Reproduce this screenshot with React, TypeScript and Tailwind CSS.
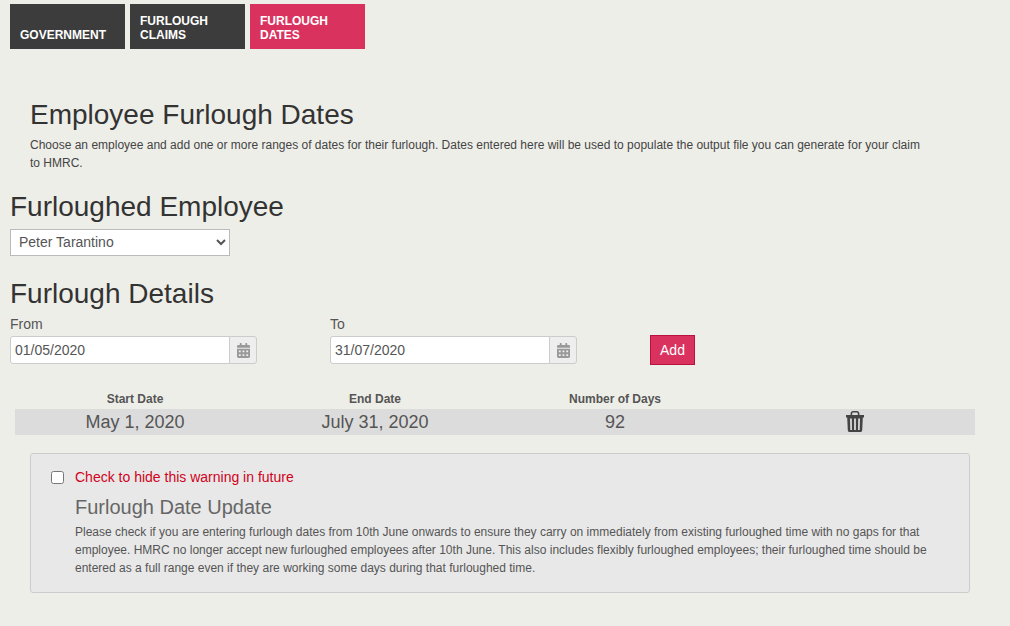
import { FaCalendarAlt } from "react-icons/fa";

function DateField({ label, value, className }: { label: string; value: string; className?: string }) {
  return (
    <div className={"flex flex-col w-[247px] " + (className ?? "")}>
      <label className="text-sm leading-5 h-[20px] text-[#555] mb-[2px]">{label}</label>
      <div className="flex h-[28px]">
        <input
          type="text"
          defaultValue={value}
          className="w-[220px] h-full bg-white border border-[#ccc] rounded-l-[3px] px-[4px] text-sm text-[#555] outline-none"
        />
        <div className="w-[28px] h-full -ml-px flex items-center justify-center bg-[#eee] border border-[#ccc] rounded-r-[3px]">
          <FaCalendarAlt className="w-[13px] h-[15px] text-[#999]" />
        </div>
      </div>
    </div>
  );
}

function TrashIcon() {
  return (
    <svg viewBox="0 0 18 21" className="w-[18px] h-[21px] -mt-[1px] text-[#444]" fill="currentColor">
      <path
        fillRule="evenodd"
        d="M0 4H4.6V2.6C4.6 1.2 5.6 0 7 0H11C12.4 0 13.4 1.2 13.4 2.6V4H18V6.4H16.8L16.2 19.2C16.2 20.2 15.4 21 14.4 21H3.6C2.6 21 1.8 20.2 1.8 19.2L1.2 6.4H0ZM6.2 4H11.8V2.8C11.8 2 11.4 1.5 10.6 1.5H7.4C6.6 1.5 6.2 2 6.2 2.8ZM4 7.4L4.3 19H6L5.8 7.4ZM8.1 7.4V19H9.9V7.4ZM12.2 7.4L12 19H13.7L14 7.4Z"
      />
    </svg>
  );
}

export default function App() {
  return (
    <div className="w-[1010px] h-[626px] overflow-hidden bg-[#eeeee8] font-['Liberation_Sans',Arial,sans-serif] text-[#333]">
      <nav className="flex gap-[5px] pt-[4px] pl-[10px]">
        <a className="w-[115px] h-[45px] bg-[#3c3c3c] text-white text-xs font-bold uppercase leading-[14px] px-[10px] pt-[24px]">Government</a>
        <a className="w-[115px] h-[45px] bg-[#3c3c3c] text-white text-xs font-bold uppercase leading-[14px] px-[10px] pt-[10px]">Furlough<br />Claims</a>
        <a className="w-[115px] h-[45px] bg-[#da325f] text-white text-xs font-bold uppercase leading-[14px] px-[10px] pt-[10px]">Furlough<br />Dates</a>
      </nav>

      <div className="pl-[30px] pt-[50px] w-[925px]">
        <h1 className="text-[28px] leading-[32px] text-[#333]">Employee Furlough Dates</h1>
        <p className="mt-[5px] text-xs leading-[18px] text-[#444]">
          Choose an employee and add one or more ranges of dates for their furlough. Dates entered here will be used to populate the output file you can generate for your claim to HMRC.
        </p>
      </div>

      <div className="pl-[10px]">
        <h2 className="mt-[19px] text-[28px] leading-[32px] text-[#333]">Furloughed Employee</h2>
        <select className="block mt-[6px] w-[220px] h-[27px] bg-white border border-[#bbb] pl-[4px] pb-[2px] text-sm text-[#555] outline-none">
          <option>Peter Tarantino</option>
        </select>

        <h2 className="mt-[22px] text-[28px] leading-[32px] text-[#333]">Furlough Details</h2>
        <div className="flex mt-[4px] items-end">
          <DateField label="From" value="01/05/2020" />
          <DateField label="To" value="31/07/2020" className="ml-[73px]" />
          <button className="ml-[73px] mb-[-1px] w-[45px] h-[30px] bg-[#da325f] border border-[#b8123f] text-white text-sm">Add</button>
        </div>
      </div>

      <div className="mt-[27px] ml-[15px] w-[960px]">
        <div className="grid grid-cols-4 h-[18px] text-xs font-bold leading-[17px] text-center text-[#555]">
          <div>Start Date</div>
          <div>End Date</div>
          <div>Number of Days</div>
          <div></div>
        </div>
        <div className="grid grid-cols-4 h-[26px] items-center bg-[#dcdcdc] text-lg leading-[26px] text-center text-[#555]">
          <div>May 1, 2020</div>
          <div>July 31, 2020</div>
          <div>92</div>
          <div className="flex justify-center">
            <TrashIcon />
          </div>
        </div>
      </div>

      <div className="mt-[18px] ml-[30px] w-[940px] h-[140px] bg-[#e8e8e8] border border-[#ccc] rounded-[3px] pt-[13px] pl-[20px] pr-[20px]">
        <label className="flex items-center h-[20px] text-sm text-[#d0021b]">
          <input type="checkbox" className="w-[13px] h-[13px] mr-[11px]" />
          Check to hide this warning in future
        </label>
        <div className="pl-[24px]">
          <h4 className="mt-[8px] text-xl leading-[24px] text-[#666]">Furlough Date Update</h4>
          <p className="mt-[4px] text-xs leading-[18px] text-[#555]">
            Please check if you are entering furlough dates from 10th June onwards to ensure they carry on immediately from existing furloughed time with no gaps for that employee. HMRC no longer accept new furloughed employees after 10th June. This also includes flexibly furloughed employees; their furloughed time should be entered as a full range even if they are working some days during that furloughed time.
          </p>
        </div>
      </div>
    </div>
  );
}
